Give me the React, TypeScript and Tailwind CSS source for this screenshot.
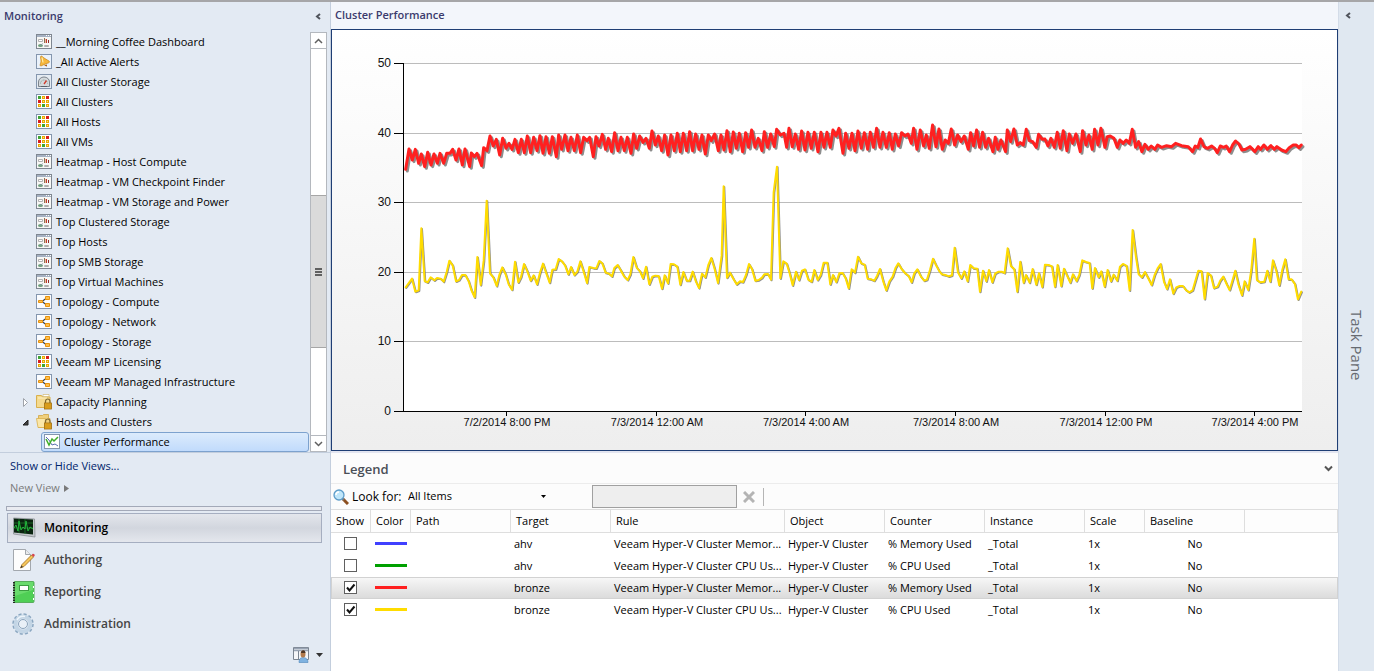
import { useState } from 'react';
import type { ReactNode } from 'react';
import clsx from 'clsx';

type IconName = 'dashboard' | 'alert' | 'gauge' | 'state' | 'topology' | 'folder' | 'folderOpen' | 'perf';

interface TreeItem {
  label: string;
  icon: IconName;
}

interface Counter {
  id: number;
  shown: boolean;
  color: string;
  target: string;
  rule: string;
  counter: string;
}

interface Segment {
  start: number;
  points: string;
}

const treeItems: TreeItem[] = [
  { label: '__Morning Coffee Dashboard', icon: 'dashboard' },
  { label: '_All Active Alerts', icon: 'alert' },
  { label: 'All Cluster Storage', icon: 'gauge' },
  { label: 'All Clusters', icon: 'state' },
  { label: 'All Hosts', icon: 'state' },
  { label: 'All VMs', icon: 'state' },
  { label: 'Heatmap - Host Compute', icon: 'dashboard' },
  { label: 'Heatmap - VM Checkpoint Finder', icon: 'dashboard' },
  { label: 'Heatmap - VM Storage and Power', icon: 'dashboard' },
  { label: 'Top Clustered Storage', icon: 'dashboard' },
  { label: 'Top Hosts', icon: 'dashboard' },
  { label: 'Top SMB Storage', icon: 'dashboard' },
  { label: 'Top Virtual Machines', icon: 'dashboard' },
  { label: 'Topology - Compute', icon: 'topology' },
  { label: 'Topology - Network', icon: 'topology' },
  { label: 'Topology - Storage', icon: 'topology' },
  { label: 'Veeam MP Licensing', icon: 'state' },
  { label: 'Veeam MP Managed Infrastructure', icon: 'topology' },
  { label: 'Capacity Planning', icon: 'folder' },
  { label: 'Hosts and Clusters', icon: 'folderOpen' },
  { label: 'Cluster Performance', icon: 'perf' },
];

const counters: Counter[] = [
  { id: 1, shown: false, color: 'bg-[#4040ff]', target: 'ahv', rule: 'Veeam Hyper-V Cluster Memor...', counter: '% Memory Used' },
  { id: 2, shown: false, color: 'bg-[#00a000]', target: 'ahv', rule: 'Veeam Hyper-V Cluster CPU Us...', counter: '% CPU Used' },
  { id: 3, shown: true, color: 'bg-[#ff2020]', target: 'bronze', rule: 'Veeam Hyper-V Cluster Memor...', counter: '% Memory Used' },
  { id: 4, shown: true, color: 'bg-[#ffdc00]', target: 'bronze', rule: 'Veeam Hyper-V Cluster CPU Us...', counter: '% CPU Used' },
];

const columns = [
  { name: 'Show', width: 'w-10' },
  { name: 'Color', width: 'w-10' },
  { name: 'Path', width: 'w-[100px]' },
  { name: 'Target', width: 'w-[100px]' },
  { name: 'Rule', width: 'w-[174px]' },
  { name: 'Object', width: 'w-[100px]' },
  { name: 'Counter', width: 'w-[100px]' },
  { name: 'Instance', width: 'w-[100px]' },
  { name: 'Scale', width: 'w-[60px]' },
  { name: 'Baseline', width: 'w-[100px]' },
];

const yTicks = [
  { label: '50', y: 33 },
  { label: '40', y: 103 },
  { label: '30', y: 172 },
  { label: '20', y: 242 },
  { label: '10', y: 311 },
  { label: '0', y: 381 },
];

const xTicks = [
  { label: '7/2/2014 8:00 PM', x: 174 },
  { label: '7/3/2014 12:00 AM', x: 324 },
  { label: '7/3/2014 4:00 AM', x: 473 },
  { label: '7/3/2014 8:00 AM', x: 623 },
  { label: '7/3/2014 12:00 PM', x: 773 },
  { label: '7/3/2014 4:00 PM', x: 922 },
];

// Samples are stored in thirds of a chart unit, split in three blocks of eight hours
const cpuSamples: Segment[] = [
  {
    start: 0,
    points:
      '92,532 111,506 121,545 131,541 139,355 149,513 158,517 167,502 178,511 186,504 197,506 206,515 215,486 223,452 233,466 243,514 252,510 261,495 271,495 281,514 289,540 299,562 307,441 317,525 326,452 335,272 345,490 355,502 365,528 373,495 382,472 392,493 401,523 411,539 420,455 430,517 438,501 447,462 457,484 467,512 476,496 486,523 495,488 504,461 514,490 524,518 532,479 542,478 551,447 561,454 570,466 580,493 588,471 598,495 607,485 616,454 626,485 636,519 643,471 655,474 664,475 673,453 682,460 692,488 702,491 711,499 718,474 728,465 738,482 748,500 758,510 766,493 775,441 785,473 795,484 804,505 813,470 823,523 832,500 841,497 851,498 861,536 869,496 879,520 887,462 897,463 907,470 916,524 925,486',
  },
  {
    start: 930,
    points:
      '5,512 14,512 23,485 33,515 42,534 51,491 61,502 70,465 79,444 89,477 99,519 110,437 116,229 126,503 135,488 146,508 155,523 165,514 174,516 183,495 192,462 201,477 211,512 221,510 231,503 238,493 249,492 258,509 266,247 276,170 286,505 295,454 305,461 314,490 323,526 333,485 342,510 351,482 360,478 370,509 380,515 388,480 398,510 407,495 416,458 427,458 436,523 444,495 454,516 463,490 473,489 482,505 491,535 500,478 510,488 519,440 529,460 539,464 548,506 559,508 568,512 576,498 585,477 595,515 604,541 613,515 623,500 632,473 640,460 650,477 661,490 671,498 680,517 688,490 697,478 708,500 718,512 726,509 735,480 744,446 753,465 762,482 771,493 781,495 792,499 801,496 809,413 819,487 829,505 838,484 848,514 856,465 866,475 877,476 885,545 894,482 904,514 912,480 922,517',
  },
  {
    start: 1860,
    points:
      '1,490 11,485 20,485 29,489 38,415 48,468 58,478 67,545 76,455 86,518 93,495 104,518 113,477 124,524 132,490 142,531 150,464 161,465 171,469 180,530 188,465 199,528 207,476 217,498 226,518 234,493 245,513 253,495 262,451 273,456 284,459 292,535 300,474 311,502 319,484 329,530 338,480 348,514 356,494 367,512 375,470 384,462 395,468 404,541 413,360 423,440 431,492 441,502 450,486 460,505 470,525 479,495 488,475 497,462 507,515 516,537 525,508 535,551 544,532 554,528 564,528 573,540 583,547 593,541 602,510 610,482 620,484 629,567 638,489 648,497 657,534 668,530 676,512 685,500 695,522 704,540 713,510 721,482 731,525 741,556 749,514 760,540 769,480 778,386 786,510 796,517 808,515 817,482 826,515 834,451 844,482 853,526 862,480 871,448 881,508 890,508 900,522 909,568 919,545',
  },
];

const memorySamples: Segment[] = [
  {
    start: 0,
    points:
      '92,178 102,117 112,150 121,118 131,160 139,132 149,170 158,127 168,165 177,132 187,160 195,130 206,160 215,130 225,130 233,118 243,150 252,117 262,165 270,117 284,170 289,129 298,140 306,130 320,167 326,113 336,122 345,78 355,108 364,88 374,135 383,85 393,115 402,100 411,118 420,88 430,128 439,88 448,128 457,78 467,128 476,82 486,122 495,77 504,130 513,80 523,130 532,80 544,140 551,75 560,118 570,75 579,122 588,82 598,122 607,75 617,128 626,82 636,92 644,82 655,140 663,80 672,108 682,73 692,118 700,85 710,125 719,68 729,122 738,82 748,122 757,82 768,130 776,72 785,115 794,78 804,97 813,85 823,115 831,63 841,105 850,78 860,122 869,75 879,135 888,75 898,122 907,70 916,125 925,70',
  },
  {
    start: 930,
    points:
      '5,122 14,65 23,122 32,72 42,118 51,75 61,132 70,75 79,92 89,72 100,122 108,75 117,120 126,62 136,125 145,66 154,115 163,70 173,125 182,68 191,112 200,60 210,112 220,85 231,122 238,65 248,112 257,72 268,110 275,58 286,75 297,70 305,112 312,55 322,110 331,72 341,118 350,63 360,120 369,67 379,115 388,67 399,125 408,67 417,112 426,67 436,112 444,60 453,78 462,55 474,130 482,70 492,115 501,70 510,122 519,63 529,115 538,68 548,118 556,67 566,112 575,55 585,112 594,67 604,112 613,68 622,118 631,72 641,108 650,68 660,78 669,72 679,100 686,55 696,118 706,60 716,108 724,75 733,115 743,45 753,110 762,57 772,118 781,90 790,100 799,57 809,105 818,75 828,95 838,78 850,118 857,68 866,108 875,60 884,112 893,67 902,112 911,85 924,125',
  },
  {
    start: 1860,
    points:
      '1,82 9,118 18,90 32,125 37,60 47,95 57,57 67,105 76,98 85,105 94,58 103,92 113,95 124,112 131,73 142,88 150,87 159,108 168,85 178,112 187,67 196,115 205,62 216,122 223,72 233,100 243,72 256,125 263,62 273,105 282,75 292,118 299,58 309,105 318,55 330,112 337,80 346,78 357,85 367,112 375,90 385,100 394,90 403,100 412,58 422,112 431,95 441,125 450,103 460,118 469,108 480,118 488,105 500,112 515,107 530,110 542,100 560,107 580,110 593,125 601,108 609,112 617,87 627,110 638,115 650,108 659,115 667,128 676,108 686,112 694,108 704,125 713,105 722,93 732,102 741,120 752,118 765,110 780,125 790,110 797,118 807,105 817,118 828,107 838,118 846,110 860,120 873,125 883,113 895,105 904,105 912,113 919,105',
  },
];

function joinSegments(segments: Segment[]) {
  return segments
    .flatMap((segment) =>
      segment.points.split(' ').map((pair) => {
        const [x, y] = pair.split(',').map(Number);
        return `${x + segment.start},${y}`;
      })
    )
    .join(' ');
}

function Frame({ children, fill = '#f4f8fc', stroke = '#8496ae' }: { children: ReactNode; fill?: string; stroke?: string }) {
  return (
    <>
      <rect x="0.5" y="0.5" width="15" height="14" fill={fill} stroke={stroke} />
      {children}
    </>
  );
}

const stateColors = ['#3fa535', '#e8a800', '#d81e1e', '#d81e1e', '#e8a800', '#e8a800', '#e8a800', '#3fa535', '#e8a800'];

function TreeIcon({ name }: { name: IconName }) {
  return (
    <svg className="h-4 w-4 shrink-0" viewBox="0 0 16 16" aria-hidden="true">
      {name === 'dashboard' && (
        <Frame fill="#f7f7f5" stroke="#7f8791">
          <path d="M1 1h14v2H1z" fill="#a5b1c2" />
          <path d="M10 1.5h1M12 1.5h1M14 1.5h1" stroke="#fff" />
          <path d="M2.500 5.500h4v2h-4zM8.500 11.500h4v1h-4z" fill="#fff" stroke="#b0b0b0" />
          <path d="M8.500 4v5" stroke="#8a7055" />
          <path d="M9.500 5v4" stroke="#e8b9a0" />
          <path d="M10.500 5v4" stroke="#c0392b" />
          <path d="M12.500 6v3" stroke="#8f2a2a" />
          <ellipse cx="4.500" cy="11.500" rx="2.500" ry="1.500" fill="#6f9f7c" />
          <path d="M4.500 11.500l2-2" stroke="#8b98a8" />
        </Frame>
      )}
      {name === 'alert' && (
        <Frame fill="#eaf2fb">
          <path d="M5 2c1 0 2 1 3 2l5 3c1 1 0 2-1 2l-5 2-2 1c-2 0 0-3 0-5s-1-4 0-5z" fill="#f6b73c" stroke="#c78312" strokeWidth="0.7" />
          <path d="M6 3.500l1 5" stroke="#fff0b0" strokeWidth="1.200" />
          <path d="M8 11.500l3-1v2z" fill="#a85b12" />
        </Frame>
      )}
      {name === 'gauge' && (
        <Frame fill="#e4ebf2">
          <path d="M2.500 12.500V8a5.500 5 0 0 1 11 0v4.500z" fill="#d4d9dd" stroke="#7d858d" />
          <path d="M4.500 9.500a3.500 3.500 0 0 1 7 0" fill="none" stroke="#7a9f92" strokeDasharray="1 1" />
          <path d="M8 10l2.500-3.500" stroke="#d03a2b" strokeWidth="1.300" />
          <path d="M5 12.500h6" stroke="#596068" />
        </Frame>
      )}
      {name === 'state' && (
        <Frame fill="#fff" stroke="#8496ae">
          {stateColors.map((color, i) => (
            <rect key={i} x={2 + (i % 3) * 4} y={2 + Math.floor(i / 3) * 4} width="3" height="3" fill={color} />
          ))}
          {[1, 4, 5, 6, 8].map((i) => (
            <rect key={i} x={3 + (i % 3) * 4} y={3 + Math.floor(i / 3) * 4} width="1" height="1" fill="#ffdf7a" />
          ))}
        </Frame>
      )}
      {name === 'topology' && (
        <Frame fill="#fbfcfe">
          <path d="M6 7.500l4-3M6 7.500l4 3" fill="none" stroke="#39424e" strokeWidth="1.200" />
          <path d="M2.500 6.500h4v2h-4zM9.500 2.500h4v3h-4zM9.500 9.500h4v3h-4z" fill="#ffc04d" stroke="#e8930c" />
        </Frame>
      )}
      {name === 'folder' && (
        <>
          <path d="M0.500 1.500h5l1 1.500h7.500v10.500H0.500z" fill="#f5da8e" stroke="#d9b04d" />
          <path d="M7 0.500h6v2H7z" fill="#fff" stroke="#cfae5d" strokeWidth="0.6" />
          <path d="M2 4h9" stroke="#fdf2c6" />
          <Lock />
        </>
      )}
      {name === 'folderOpen' && (
        <>
          <path d="M2.500 1.500h4l1-1h5v4h1.500v9H2.500z" fill="#f0cf7c" stroke="#cfa545" strokeWidth="0.8" />
          <path d="M0.500 4.500h9l-1 9H2z" fill="#fbe7a8" stroke="#d9b04d" strokeWidth="0.8" />
          <Lock />
        </>
      )}
      {name === 'perf' && (
        <Frame fill="#fff">
          <path d="M2 3l3 3 3 5 3-1 3 2" fill="none" stroke="#5a6fb0" />
          <path d="M2 5l3 6 3-6 2 2 4-4" fill="none" stroke="#3fae2c" strokeWidth="1.500" />
        </Frame>
      )}
    </svg>
  );
}

function Lock() {
  return (
    <>
      <path d="M9.500 9V7.500a2.250 2.500 0 0 1 4.500 0V9" fill="none" stroke="#7d6a35" strokeWidth="1.200" />
      <rect x="8.500" y="9" width="7" height="6" fill="#e7a91f" stroke="#9f6d10" strokeWidth="0.8" />
      <path d="M9 11h6M9 13h6" stroke="#c08414" strokeWidth="0.7" />
    </>
  );
}

function Tree() {
  return (
    <ul className="min-w-0 flex-1 text-[11px] text-black">
      {treeItems.map((item) => {
        const isFolder = item.icon === 'folder' || item.icon === 'folderOpen';
        const selected = item.icon === 'perf';
        return (
          <li key={item.label} className={clsx('flex h-5 items-center', selected ? 'pl-[41px]' : 'pl-[21px]')}>
            {!selected && (
              <span className="w-[15px] shrink-0">
                {isFolder && (
                  <svg className="h-[9px] w-[9px]" viewBox="0 0 9 9" aria-hidden="true">
                    {item.icon === 'folder' ? (
                      <path d="M2.500 0.500l4 4-4 4z" fill="#fff" stroke="#a0a4aa" />
                    ) : (
                      <path d="M7 2v5H2z" fill="#404040" stroke="#202020" />
                    )}
                  </svg>
                )}
              </span>
            )}
            <button
              type="button"
              className={clsx(
                'flex h-5 items-center gap-1 whitespace-nowrap',
                selected &&
                  'mr-px flex-1 rounded-[3px] border border-[#7da2ce] bg-linear-to-b from-[#dcebfc] to-[#c1dbfc] px-[2px]'
              )}
            >
              <TreeIcon name={item.icon} />
              {item.label}
            </button>
          </li>
        );
      })}
    </ul>
  );
}

function ScrollBar() {
  return (
    <div className="mr-[3px] flex w-[17px] flex-col border border-[#b4b8be] bg-white">
      <div className="flex h-4 items-center justify-center border-b border-[#b4b8be]">
        <svg className="h-[6px] w-[9px]" viewBox="0 0 9 6" aria-hidden="true">
          <path d="M1 5l3.500-3.500L8 5" fill="none" stroke="#606060" strokeWidth="1.500" />
        </svg>
      </div>
      <div className="flex flex-1 flex-col pt-[146px]">
        <div className="flex h-[153px] items-center justify-center border-y border-[#a6a6a6] bg-[#dadada]">
          <svg className="h-2 w-[7px]" viewBox="0 0 7 8" aria-hidden="true">
            <path d="M0 1h7M0 4h7M0 7h7" stroke="#606060" strokeWidth="2" />
          </svg>
        </div>
      </div>
      <div className="flex h-4 items-center justify-center border-t border-[#b4b8be]">
        <svg className="h-[6px] w-[9px]" viewBox="0 0 9 6" aria-hidden="true">
          <path d="M1 1l3.500 3.500L8 1" fill="none" stroke="#606060" strokeWidth="1.500" />
        </svg>
      </div>
    </div>
  );
}

function MonitoringIcon() {
  return (
    <svg className="h-6 w-6" viewBox="0 0 24 24" aria-hidden="true">
      <path d="M1.500 2l21 1 0.500 18-21.500-3z" fill="#c4c8cc" stroke="#8b9095" strokeWidth="0.8" />
      <path d="M2 2.500l19 1v15l-19-2z" fill="#0a2410" />
      <path d="M2 7h19M2 12h19M7 3v14M13 3v15" stroke="#1c7a2c" strokeWidth="0.8" />
      <path d="M2 12l2-3 2 6 1-10 2 9 2-3 2 2 1-8 2 10 2-4 3 2" fill="none" stroke="#23b63c" />
    </svg>
  );
}

function AuthoringIcon() {
  return (
    <svg className="h-6 w-6" viewBox="0 0 24 24" aria-hidden="true">
      <path d="M1.500 1.500h12l5 5v16h-17z" fill="#fdfdfd" stroke="#a3a8ae" />
      <path d="M13.500 1.500v5h5" fill="#e9ebee" stroke="#a3a8ae" />
      <path d="M8.500 20l1.500-3.500L19.500 7l2 2L12 18.500z" fill="#f6c65b" stroke="#9b6a1b" strokeWidth="0.8" />
      <path d="M8.500 20l1-2.500 1.500 1.500z" fill="#303030" />
      <path d="M19.500 7l1-1c1-1 3 1 2 2l-1 1z" fill="#d5474f" />
    </svg>
  );
}

function ReportingIcon() {
  return (
    <svg className="h-6 w-6" viewBox="0 0 24 24" aria-hidden="true">
      <rect x="2" y="1.500" width="20" height="21" rx="1" fill="#4fcf55" stroke="#58ad5c" />
      <path d="M3 2h18v8L3 16z" fill="#7be37c" opacity="0.6" />
      <path d="M2 2v21" stroke="#202820" strokeWidth="2" strokeDasharray="1.500 1" />
      <rect x="7.500" y="5.500" width="9" height="5" fill="#fff" stroke="#3c9c42" />
      <path d="M21.500 6v2M21.500 12v2M21.500 18v2" stroke="#fff" />
    </svg>
  );
}

function AdministrationIcon() {
  return (
    <svg className="h-6 w-6" viewBox="0 0 24 24" aria-hidden="true">
      <circle cx="11" cy="12" r="9.500" fill="none" stroke="#8aa6c0" strokeWidth="2.500" strokeDasharray="3 2" />
      <circle cx="11" cy="12" r="7.500" fill="none" stroke="#c3d5e5" strokeWidth="4" />
      <circle cx="11" cy="12" r="4.500" fill="#e9f0f7" stroke="#8ba4bc" />
      <path d="M5 8a7.500 7.500 0 0 1 8-3.500" fill="none" stroke="#eef5fb" strokeWidth="1.500" />
    </svg>
  );
}

const workspaces = [
  { label: 'Monitoring', icon: <MonitoringIcon /> },
  { label: 'Authoring', icon: <AuthoringIcon /> },
  { label: 'Reporting', icon: <ReportingIcon /> },
  { label: 'Administration', icon: <AdministrationIcon /> },
];

function Sidebar() {
  const [active, setActive] = useState('Monitoring');

  return (
    <aside className="flex w-[331px] shrink-0 flex-col border-r border-[#c3cedd] bg-[#e3eaf3]">
      <header className="flex h-[30px] items-center justify-between pr-2 pb-px pl-1">
        <h2 className="text-[11px] font-semibold text-[#3b3b6d]">Monitoring</h2>
        <button type="button" aria-label="Collapse navigation">
          <CollapseIcon />
        </button>
      </header>
      <div className="flex border-b border-[#c3cedd]">
        <Tree />
        <ScrollBar />
      </div>
      <div className="flex flex-col items-start px-[10px] pt-[2px] text-[11px]">
        <a href="#views" className="leading-[22px] text-[#00246b]">Show or Hide Views...</a>
        <button type="button" className="flex items-center gap-1 leading-[22px] text-[#7a7a7a]">
          New View
          <svg className="h-[7px] w-[5px]" viewBox="0 0 5 7" aria-hidden="true">
            <path d="M0 0l5 3.500L0 7z" fill="#7a7a7a" />
          </svg>
        </button>
      </div>
      <div className="mt-[7px] mr-2 ml-[6px] h-[5px] border border-[#a3a9b8] bg-[#e9ebf1]" />
      <nav className="mt-[2px] mr-2 ml-[7px] flex flex-col gap-[2px]">
        {workspaces.map((item) => (
          <button
            key={item.label}
            type="button"
            onClick={() => setActive(item.label)}
            className={clsx(
              'flex h-[30px] items-center gap-2 border pl-1 text-[12px] font-semibold',
              active === item.label
                ? 'border-[#a5aec0] bg-linear-to-b from-[#e3e6ec] via-[#d2d6de] to-[#e4e7ed] text-black'
                : 'border-transparent text-[#444444]'
            )}
          >
            {item.icon}
            {item.label}
          </button>
        ))}
      </nav>
      <div className="mt-2 mr-[7px] flex items-center justify-end">
        <button type="button" aria-label="Configure buttons" className="flex items-center gap-[7px]">
          <svg className="h-4 w-4" viewBox="0 0 16 16" aria-hidden="true">
            <path d="M0.500 0.500h15v12H0.500z" fill="#f5f6f8" stroke="#7b8490" />
            <path d="M1 1.500h14M1 3.500h14" stroke="#98a3b3" strokeWidth="1.500" />
            <path d="M5.500 4v9" stroke="#7b8490" />
            <path d="M6 15.500c0-4 2-5 4-5s5 1 5 5z" fill="#7fb2e0" stroke="#4f86bb" strokeWidth="0.600" />
            <ellipse cx="10" cy="7" rx="2.500" ry="3.500" fill="#b27a4c" />
            <path d="M8 6c0-3 4-4 4.500 0z" fill="#4c3524" />
          </svg>
          <svg className="h-1 w-[7px]" viewBox="0 0 7 4" aria-hidden="true">
            <path d="M0 0h7L3.500 4z" fill="#333" />
          </svg>
        </button>
      </div>
    </aside>
  );
}

function CollapseIcon() {
  return (
    <svg className="h-[7px] w-[7px]" viewBox="0 0 7 7" aria-hidden="true">
      <path d="M5 1L2 3.500 5 6" fill="none" stroke="#50545c" strokeWidth="2" />
    </svg>
  );
}

function Series({ samples, color, width, shadow }: { samples: Segment[]; color: string; width: number; shadow: number }) {
  const points = joinSegments(samples);
  return (
    <g transform="translate(43 80) scale(0.3333)" fill="none" strokeWidth={width} strokeLinejoin="round" strokeLinecap="round">
      <polyline points={points} stroke="#707070" opacity="0.8" transform={`translate(${shadow} ${shadow})`} />
      <polyline points={points} stroke={color} />
    </g>
  );
}

function Chart() {
  return (
    <div className="border border-[#1f3e74] bg-linear-to-b from-white to-[#eeeeee]">
      <svg
        className="block w-full font-['Liberation_Sans',sans-serif]"
        viewBox="0 0 1005 420"
        role="img"
        aria-label="Cluster Performance"
      >
        <rect x="71" y="33" width="899" height="348" fill="#fff" />
        {yTicks.map((tick) => (
          <g key={tick.label}>
            <path d={`M72 ${tick.y + 0.5}H970`} stroke="#bcbcbc" />
            <path d={`M62 ${tick.y + 0.5}H72`} stroke="#000" />
            <text x="59" y={tick.y + 4} textAnchor="end" fontSize="12" fill="#111">
              {tick.label}
            </text>
          </g>
        ))}
        <path d="M71.500 33V381.500H970" fill="none" stroke="#000" />
        {xTicks.map((tick) => (
          <g key={tick.label}>
            <path d={`M${tick.x + 0.5} 382v4`} stroke="#000" />
            <text x={tick.x + 1} y="396" textAnchor="middle" fontSize="11" fill="#111">
              {tick.label}
            </text>
          </g>
        ))}
        <Series samples={cpuSamples} color="#ffdc00" width={6} shadow={2} />
        <Series samples={memorySamples} color="#ff2020" width={9} shadow={5} />
      </svg>
    </div>
  );
}

function LegendToolbar() {
  return (
    <div className="flex h-[25px] items-center bg-[#fcfcfc] pl-[2px]">
      <svg className="h-4 w-4" viewBox="0 0 16 16" aria-hidden="true">
        <path d="M10 10l5 5" stroke="#8c4f1f" strokeWidth="3" />
        <path d="M9 9l2 2" stroke="#777" strokeWidth="2" />
        <circle cx="6" cy="6" r="5" fill="#bfe6fa" stroke="#5d9cc9" strokeWidth="1.300" />
        <path d="M3 6a3 3 0 0 1 3-3" fill="none" stroke="#fff" strokeWidth="1.500" />
      </svg>
      <label htmlFor="scope" className="ml-[3px] w-14 text-[12px] whitespace-nowrap">Look for:</label>
      <div className="relative flex w-[138px] items-center">
        <select id="scope" className="w-full appearance-none bg-transparent text-[11px]">
          <option>All Items</option>
        </select>
        <svg className="pointer-events-none absolute right-0 h-[3px] w-[5px]" viewBox="0 0 5 3" aria-hidden="true">
          <path d="M0 0h5L2.500 3z" fill="#000" />
        </svg>
      </div>
      <input
        type="text"
        aria-label="Look for text"
        className="ml-[46px] h-[23px] w-[145px] border border-[#a0a0a0] bg-[#eeeeee] px-1 text-[11px]"
      />
      <button type="button" aria-label="Clear" className="ml-[6px] border-r border-[#b5b5b5] py-[3px] pr-2">
        <svg className="h-3 w-3" viewBox="0 0 12 12" aria-hidden="true">
          <path d="M1 1l10 10M11 1L1 11" stroke="#b4b4b4" strokeWidth="3" />
        </svg>
      </button>
    </div>
  );
}

function LegendTable() {
  const [rows, setRows] = useState(counters);

  const toggle = (id: number) => {
    setRows(rows.map((row) => (row.id === id ? { ...row, shown: !row.shown } : row)));
  };

  return (
    <table className="w-full table-fixed border-separate border-spacing-0 text-[11px]">
      <thead>
        <tr className="h-6 bg-[#fdfdfd] text-left">
          {columns.map((column) => (
            <th key={column.name} className={clsx('border-y border-r border-[#dedede] pl-[5px] font-normal', column.width)}>
              {column.name}
            </th>
          ))}
          <th className="border-y border-r border-[#dedede]" aria-label="Spacer" />
        </tr>
      </thead>
      <tbody>
        {rows.map((row) => (
          <tr
            key={row.id}
            className={clsx(
              'h-[22px] whitespace-nowrap',
              row.id === 3 && 'bg-linear-to-b from-[#f8f8f8] to-[#dadada] outline -outline-offset-1 outline-[#d2d2d2]'
            )}
          >
            <td className="pb-px pl-[13px]">
              <span className="relative block h-[13px] w-[13px]">
                <input
                  type="checkbox"
                  aria-label={`Show ${row.target} ${row.counter}`}
                  checked={row.shown}
                  onChange={() => toggle(row.id)}
                  className="block h-[13px] w-[13px] appearance-none border border-[#606060] bg-white"
                />
                {row.shown && (
                  <svg className="pointer-events-none absolute inset-0" viewBox="0 0 13 13" aria-hidden="true">
                    <path d="M3 6.500l2.500 3L10.500 3.500" fill="none" stroke="#111" strokeWidth="2" />
                  </svg>
                )}
              </span>
            </td>
            <td className="pb-px pl-1">
              <div className={clsx('h-[3px] w-8', row.color)} />
            </td>
            <td />
            <td className="pl-[3px]">{row.target}</td>
            <td className="pl-[3px]">{row.rule}</td>
            <td className="pl-[3px]">Hyper-V Cluster</td>
            <td className="pl-[3px]">{row.counter}</td>
            <td className="pl-[3px]">_Total</td>
            <td className="pl-[3px]">1x</td>
            <td className="text-center">No</td>
            <td />
          </tr>
        ))}
      </tbody>
    </table>
  );
}

export default function App() {
  return (
    <div className="flex min-h-screen border-t-2 border-[#a6a6a8] bg-white font-['Open_Sans',sans-serif] text-black">
      <Sidebar />
      <main className="flex min-w-0 flex-1 flex-col">
        <h1 className="flex h-[27px] items-center bg-[#f3f6fb] pl-1 text-[11px] font-semibold text-[#3b3b6d]">
          Cluster Performance
        </h1>
        <Chart />
        <section>
          <header className="flex h-[33px] items-center justify-between border-t-2 border-b border-t-[#e3e5f0] border-b-[#ececec] bg-[#fcfcfc] pr-[5px] pl-3">
            <h2 className="pt-[3px] text-[13px] font-semibold text-[#4a4f57]">Legend</h2>
            <button type="button" aria-label="Collapse legend">
              <svg className="h-[7px] w-[9px]" viewBox="0 0 9 7" aria-hidden="true">
                <path d="M1 1.500L4.500 5 8 1.500" fill="none" stroke="#555" strokeWidth="2" />
              </svg>
            </button>
          </header>
          <LegendToolbar />
          <LegendTable />
        </section>
      </main>
      <aside className="flex w-9 shrink-0 flex-col items-center border-l border-[#d3dce8] bg-[#e0e8f1]">
        <button type="button" aria-label="Expand task pane" className="mt-[10px] mr-[16px] flex">
          <CollapseIcon />
        </button>
        <span className="mt-[291px] text-[15px] text-[#666a70] [writing-mode:vertical-rl]">Task Pane</span>
      </aside>
    </div>
  );
}
